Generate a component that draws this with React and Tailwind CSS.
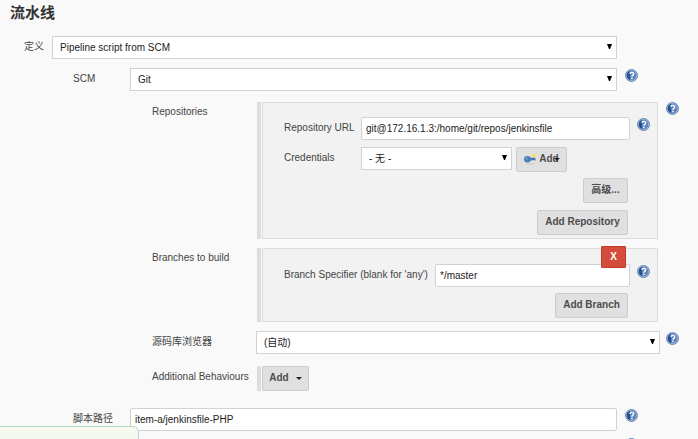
import React from "react";

function Help({ className = "" }) {
  return (
    <svg className={"h-[13px] w-[13px] shrink-0 " + className} viewBox="0 0 13 13" role="img">
      <circle cx="6.5" cy="6.5" r="6" fill="#b0c3de" stroke="#5b7db0" strokeWidth="0.9" />
      <circle cx="6.5" cy="6.5" r="4.9" fill="#5f86bd" />
      <path d="M1.8 6.5a4.6 4.6 0 0 1 3.2-4.4v8.8a4.6 4.6 0 0 1-3.2-4.4z" fill="#264f92" />
      <path d="M4.9 4.9c.1-2.1 3.8-2.1 3.7.1 0 1.4-1.7 1.3-1.7 2.7" fill="none" stroke="#fff" strokeWidth="1.4" />
      <rect x="6.2" y="8.7" width="1.4" height="1.4" fill="#fff" />
    </svg>
  );
}

function Select({ className, children }) {
  return (
    <div className={"flex h-[23px] shrink-0 items-center justify-between border border-[#d2d2d2] bg-white pl-[7px] pr-[4px] text-[#222] " + className}>
      <span className="whitespace-pre">{children}</span>
      <svg className="-mt-[2px] h-[5px] w-[5px]" viewBox="0 0 5 5">
        <path d="M0 0h5L3 5H2z" fill="#000" />
      </svg>
    </div>
  );
}

function Input({ className, children }) {
  return (
    <div className={"flex h-[23px] shrink-0 items-center rounded-[2px] border border-[#d2d2d2] bg-white pl-[4px] text-[#222] " + className}>
      {children}
    </div>
  );
}

function Button({ className, children }) {
  return (
    <button className={"flex h-[25px] shrink-0 items-center justify-center whitespace-nowrap rounded-[2px] border border-[#cccccc] bg-[#e0e0e0] pb-[1px] font-bold text-[#4d4d4d] " + className}>
      {children}
    </button>
  );
}

function Label({ className, children }) {
  return <div className={"flex h-[22px] shrink-0 items-center whitespace-nowrap text-[#444] " + className}>{children}</div>;
}

function Caret() {
  return (
    <svg className="h-[3px] w-[6px]" viewBox="0 0 6 3">
      <path d="M0 0h6L3 3z" fill="#222" />
    </svg>
  );
}

function Key() {
  return (
    <svg className="h-[12px] w-[12px] shrink-0" viewBox="0 0 12 12">
      <ellipse cx="6" cy="10.6" rx="4.5" ry="0.6" fill="#cdcdcd" />
      <path d="M5 4.7h6.5v2.8H10v-.6H8.6v.6H5z" fill="#4779b4" />
      <circle cx="3.4" cy="6.2" r="3.3" fill="#477db9" />
      <circle cx="2.7" cy="5.5" r="1.2" fill="#6f9bcc" />
      <path d="M9.4 .1l.7 1.1 1.4-.1-.7 1.2.7 1.2-1.4-.1-.7 1.1-.7-1.1-1.4.1.7-1.2-.7-1.2 1.4.1z" fill="#f6e34a" />
    </svg>
  );
}

function Chunk({ className, children }) {
  return (
    <div className={"flex w-[401px] shrink-0 gap-[1px] " + className}>
      <div className="w-[4px] bg-[#dddddd]" />
      <div className="w-[396px] border border-[#dcdcdc] bg-[#f2f2f2]">{children}</div>
    </div>
  );
}

export default function App() {
  return (
    <div className="relative h-[439px] w-[698px] overflow-hidden bg-[#f9f9f9] font-['Liberation_Sans','Noto_Sans_CJK_SC',sans-serif] text-[10px] leading-[12px]">
      <h1 className="h-[36px] pl-[10px] pt-[3px] text-[15px] font-bold leading-[20px] text-[#333]">流水线</h1>

      <div className="flex h-[32px] pl-[24px]">
        <Label className="w-[28px]">定义</Label>
        <Select className="w-[565px]">Pipeline script from SCM</Select>
      </div>

      <div className="flex h-[34px] pl-[73px]">
        <Label className="w-[57px]">SCM</Label>
        <Select className="w-[487px]">Git</Select>
        <Help className="ml-[8px] mt-[1px]" />
      </div>

      <div className="flex h-[146px] pl-[152px]">
        <Label className="w-[105px] pb-[2px]">Repositories</Label>
        <Chunk className="h-[137px]">
          <div className="flex h-[30px] pl-[21px] pt-[14px]">
            <Label className="w-[77px]">Repository URL</Label>
            <Input className="w-[269px]">git@172.16.1.3:/home/git/repos/jenkinsfile</Input>
            <Help className="ml-[7px] mt-[1px]" />
          </div>
          <div className="mt-[14px] flex h-[31px] pl-[21px]">
            <Label className="w-[77px]">Credentials</Label>
            <Select className="w-[151px]">- 无 -</Select>
            <Button className="ml-[4px] w-[51px] gap-[3px] pl-[1px]">
              <Key />
              <span className="flex items-center">
                Add
                <span className="-ml-[5px]"><Caret /></span>
              </span>
            </Button>
          </div>
          <div className="flex flex-col items-end gap-[7px] pr-[29px]">
            <Button className="w-[45px]">高级...</Button>
            <Button className="w-[91px]">Add Repository</Button>
          </div>
        </Chunk>
        <Help className="ml-[8px]" />
      </div>

      <div className="flex h-[83px] pl-[152px]">
        <Label className="w-[105px] pb-[2px]">Branches to build</Label>
        <Chunk className="h-[74px]">
          <div className="flex h-[44px] pl-[21px] pt-[15px]">
            <Label className="w-[151px]">Branch Specifier (blank for 'any')</Label>
            <div className="relative">
              <Input className="w-[195px]">*/master</Input>
              <button className="absolute -top-[18px] right-[4px] flex h-[22px] w-[25px] items-center justify-center rounded-[1px] border border-[#c03b2e] bg-[#d54c3c] font-bold text-white">
                X
              </button>
            </div>
            <Help className="ml-[7px] mt-[1px]" />
          </div>
          <div className="flex justify-end pr-[29px]">
            <Button className="w-[73px]">Add Branch</Button>
          </div>
        </Chunk>
      </div>

      <div className="flex h-[35px] pl-[152px]">
        <Label className="w-[104px]">源码库浏览器</Label>
        <Select className="w-[404px]">(自动)</Select>
        <Help className="ml-[6px] mt-[1px]" />
      </div>

      <div className="flex h-[42px] pl-[152px]">
        <Label className="w-[105px]">Additional Behaviours</Label>
        <div className="mr-[1px] h-[25px] w-[4px] bg-[#dddddd]" />
        <Button className="w-[47px] gap-[7px]">
          Add
          <Caret />
        </Button>
      </div>

      <div className="flex h-[30px] pl-[73px]">
        <Label className="w-[57px]">脚本路径</Label>
        <Input className="w-[487px]">item-a/jenkinsfile-PHP</Input>
        <Help className="ml-[8px] mt-[1px]" />
      </div>

      <div className="flex pl-[625px]">
        <Help />
      </div>

      <div className="absolute -left-[2px] top-[426px] h-[20px] w-[141px] rounded-tr-[6px] border border-[#b5d8c4] bg-[#f6f9f0]" />
    </div>
  );
}
